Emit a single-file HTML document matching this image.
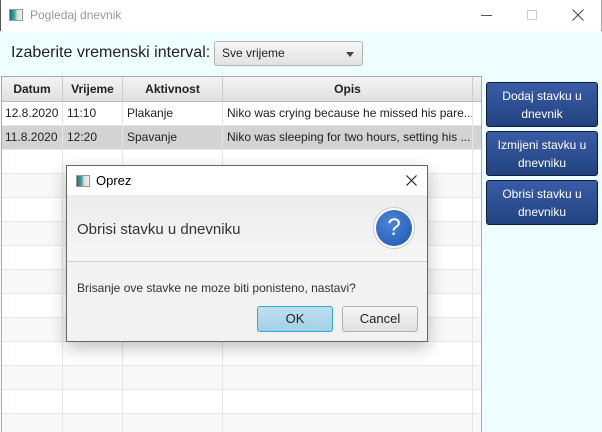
<!DOCTYPE html>
<html><head><style>
*{margin:0;padding:0;box-sizing:border-box}
body{width:602px;height:432px;overflow:hidden;background:#eefefe;font-family:"Liberation Sans","DejaVu Sans",sans-serif;position:relative;color:#222}
.abs{position:absolute}
.tb{left:0;top:0;width:602px;height:31px;background:#fff;border-left:1px solid #555;border-right:1px solid #aaa}
.appicon{width:14px;height:12px;border:1px solid #999;background:linear-gradient(90deg,#2d6a6a 0,#4aa 40%,#ddd 60%,#eee 100%)}
.tbl{left:1px;top:76px;width:481px;height:356px;background:#fff;border:1px solid #aaa;border-bottom:none;overflow:hidden}
.hdr{position:absolute;top:0;height:25px;background:linear-gradient(#f4f4f4,#e0e0e0);border-right:1px solid #ccc;border-bottom:1px solid #bbb;font-weight:bold;font-size:12px;text-align:center;line-height:24px}
.row{position:absolute;left:0;width:480px;height:24px;border-bottom:1px solid #e8e8e8}
.cell{position:absolute;top:0;height:24px;border-right:1px solid #e6e6e6;font-size:12px;line-height:23px;padding-left:4px;white-space:nowrap;overflow:hidden}
.btn{left:486px;width:112px;height:45px;border-radius:3px;background:linear-gradient(#3a5ca6,#22427f);border:1px solid #0e1e40;color:#fff;font-size:12px;text-align:center;line-height:18px;padding-top:4px}
</style></head><body>
<div class="abs tb"></div>
<div class="abs appicon" style="left:9px;top:9px"></div>
<div class="abs" style="left:30px;top:8px;font-size:12px;color:#999">Pogledaj dnevnik</div>
<div class="abs" style="left:481px;top:15px;width:11px;height:1px;background:#555"></div>
<div class="abs" style="left:527px;top:10px;width:10px;height:10px;border:1px solid #ccc"></div>
<svg class="abs" style="left:572px;top:9px" width="12" height="12"><path d="M0.5 0.5L11.5 11.5M11.5 0.5L0.5 11.5" stroke="#444" stroke-width="1"/></svg>
<div class="abs" style="left:11px;top:44px;font-size:16px;color:#222">Izaberite vremenski interval:</div>
<div class="abs" style="left:214px;top:41px;width:149px;height:25px;border:1px solid #b5b5b5;border-radius:3px;background:linear-gradient(#f6f6f6,#e2e2e2);font-size:12px;line-height:23px;padding-left:7px">Sve vrijeme
<div class="abs" style="right:8px;top:10px;width:0;height:0;border-left:4px solid transparent;border-right:4px solid transparent;border-top:5px solid #444"></div></div>

<div class="abs tbl">
<div class="hdr" style="left:0;width:61px">Datum</div>
<div class="hdr" style="left:61px;width:60px">Vrijeme</div>
<div class="hdr" style="left:121px;width:100px">Aktivnost</div>
<div class="hdr" style="left:221px;width:250px">Opis</div>
<div class="hdr" style="left:471px;width:10px"></div>
<div id="rows"></div>
</div>
<script>
var r=document.getElementById('rows'),h='';
var data=[["12.8.2020","11:10","Plakanje","Niko was crying because he missed his pare..."],["11.8.2020","12:20","Spavanje","Niko was sleeping for two hours, setting his ..."]];
for(var i=0;i<14;i++){var bg=i==1?'#d3d3d3':(i%2?'#f8f8f8':'#fff');var d=data[i]||["","","",""];
h+='<div class="row" style="top:'+(25+i*24)+'px;background:'+bg+'">'+
'<div class="cell" style="left:0;width:61px;padding-left:3px">'+d[0]+'</div>'+
'<div class="cell" style="left:61px;width:60px">'+d[1]+'</div>'+
'<div class="cell" style="left:121px;width:100px">'+d[2]+'</div>'+
'<div class="cell" style="left:221px;width:250px">'+d[3]+'</div></div>';}
r.innerHTML=h;
</script>
<div class="abs btn" style="top:82px">Dodaj stavku u<br>dnevnik</div>
<div class="abs btn" style="top:131px">Izmijeni stavku u<br>dnevniku</div>
<div class="abs btn" style="top:180px">Obrisi stavku u<br>dnevniku</div>

<div class="abs" style="left:66px;top:165px;width:362px;height:177px;background:#f2f2f2;border:1px solid #666;box-shadow:0 6px 16px rgba(0,0,0,.25)">
<div class="abs" style="left:0;top:0;width:360px;height:29px;background:#fff"></div>
<div class="abs appicon" style="left:9px;top:9px"></div>
<div class="abs" style="left:29px;top:7px;font-size:13px;color:#000">Oprez</div>
<svg class="abs" style="left:339px;top:9px" width="11" height="11"><path d="M0.5 0.5L10.5 10.5M10.5 0.5L0.5 10.5" stroke="#222" stroke-width="1.2"/></svg>
<div class="abs" style="left:0;top:29px;width:360px;height:67px;background:linear-gradient(#ececec,#f6f6f6);border-bottom:1px solid #ccc"></div>
<div class="abs" style="left:10px;top:55px;font-size:15px;color:#333">Obrisi stavku u dnevniku</div>
<div class="abs" style="left:306px;top:41px;width:42px;height:42px;border-radius:50%;background:#fff;border:1px solid #ccc"></div>
<div class="abs" style="left:309px;top:44px;width:36px;height:36px;border-radius:50%;background:radial-gradient(circle at 40% 35%,#4a86d8,#1f56b0);color:#fff;font-size:24px;text-align:center;line-height:36px">?</div>
<div class="abs" style="left:10px;top:115px;font-size:12px;color:#333">Brisanje ove stavke ne moze biti ponisteno, nastavi?</div>
<div class="abs" style="left:190px;top:140px;width:76px;height:26px;border:1px solid #2ea6e0;border-radius:3px;background:linear-gradient(#bfe0f0,#a3cfe6);font-size:13px;text-align:center;line-height:24px">OK</div>
<div class="abs" style="left:275px;top:140px;width:76px;height:26px;border:1px solid #b0b0b0;border-radius:3px;background:linear-gradient(#f6f6f6,#e0e0e0);font-size:13px;text-align:center;line-height:24px">Cancel</div>
</div>
</body></html>
